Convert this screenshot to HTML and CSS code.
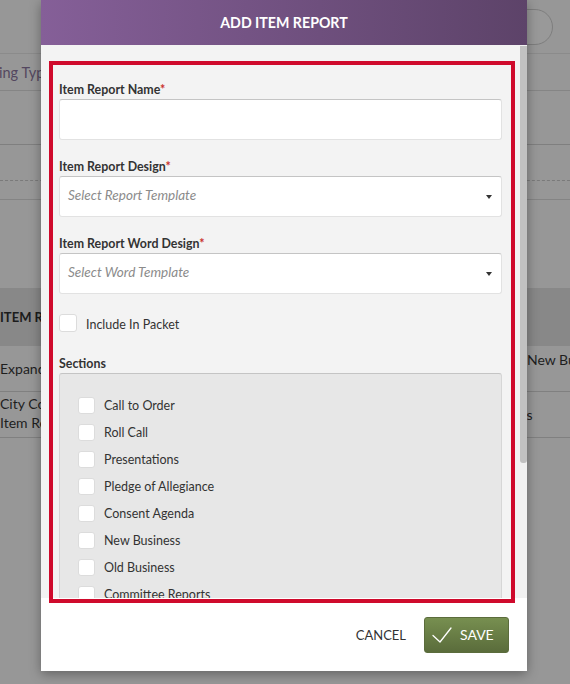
FILE: index.html
```html
<!DOCTYPE html>
<html>
<head>
<meta charset="utf-8">
<link rel="stylesheet" href="styles.css">
</head>
<body>
<div class="page">
  <div class="topbar"><div class="pill"></div></div>
  <div class="tabs"><span class="tab">ing Type</span></div>
  <div class="band band-a"></div>
  <div class="band band-b"></div>
  <div class="band band-c"></div>
  <div class="spacer"></div>
  <div class="thead"><span class="th">ITEM REPORT</span></div>
  <div class="trow">
    <div class="cell-left">Expanded</div>
    <div class="cell-right cell-top">New Bu</div>
  </div>
  <div class="trow">
    <div class="cell-left cell-two">City Council<br>Item Report</div>
    <div class="cell-right cell-hidden">Items</div>
  </div>
</div>

<div class="modal">
  <div class="modal-header">ADD ITEM REPORT</div>
  <div class="modal-body">
    <div class="form">
      <div class="field">
        <div class="label">Item Report Name<span class="req">*</span></div>
        <div class="input"></div>
      </div>
      <div class="field">
        <div class="label">Item Report Design<span class="req">*</span></div>
        <div class="input select"><span class="placeholder">Select Report Template</span><span class="caret"></span></div>
      </div>
      <div class="field field-last">
        <div class="label">Item Report Word Design<span class="req">*</span></div>
        <div class="input select"><span class="placeholder">Select Word Template</span><span class="caret"></span></div>
      </div>
      <div class="check-row packet">
        <span class="box"></span><span class="check-text">Include In Packet</span>
      </div>
      <div class="label">Sections</div>
      <div class="sections">
        <div class="check-row item"><span class="box"></span><span class="check-text">Call to Order</span></div>
        <div class="check-row item"><span class="box"></span><span class="check-text">Roll Call</span></div>
        <div class="check-row item"><span class="box"></span><span class="check-text">Presentations</span></div>
        <div class="check-row item"><span class="box"></span><span class="check-text">Pledge of Allegiance</span></div>
        <div class="check-row item"><span class="box"></span><span class="check-text">Consent Agenda</span></div>
        <div class="check-row item"><span class="box"></span><span class="check-text">New Business</span></div>
        <div class="check-row item"><span class="box"></span><span class="check-text">Old Business</span></div>
        <div class="check-row item"><span class="box"></span><span class="check-text">Committee Reports</span></div>
        <div class="check-row item"><span class="box"></span><span class="check-text">Adjournment</span></div>
      </div>
    </div>
    <div class="scrollbar"><div class="thumb"></div></div>
  </div>
  <div class="modal-footer">
    <button class="btn-cancel">CANCEL</button>
    <button class="btn-save">
      <svg class="check-icon" width="20" height="16" viewBox="0 0 20 16"><polyline points="1,8.5 8,15 19,1" fill="none" stroke="#ffffff" stroke-width="1.3" stroke-linecap="round" stroke-linejoin="round"/></svg>
      <span>SAVE</span>
    </button>
  </div>
</div>

<div class="annotation"></div>
</body>
</html>
```

FILE: styles.css
```css
html, body {
  margin: 0;
  padding: 0;
}
body {
  width: 570px;
  height: 684px;
  overflow: hidden;
  background: #979797;
  font-family: Lato, "Open Sans", sans-serif;
  position: relative;
}

/* background page (dimmed) */
.page {
  width: 570px;
  overflow: hidden;
}
.topbar {
  height: 53px;
  border-bottom: 1px solid #8b8b8b;
  display: flex;
  justify-content: flex-end;
}
.pill {
  width: 120px;
  height: 34px;
  margin-top: 9px;
  margin-right: 17px;
  border: 1px solid #7e7e7e;
  border-radius: 18px;
  background: #999999;
}
.tabs {
  height: 36px;
  border-bottom: 1px solid #858585;
  display: flex;
  align-items: center;
}
.tab {
  font-size: 14.5px;
  color: #54475f;
  margin-left: -1px;
}
.band-a {
  height: 53px;
  border-bottom: 1px solid #7f7f7f;
}
.band-b {
  height: 35px;
  border-bottom: 1px dashed #7a7a7a;
}
.band-c {
  height: 18px;
  border-bottom: 1px solid #848484;
}
.spacer {
  height: 88px;
}
.thead {
  height: 58px;
  background: #888888;
  display: flex;
  align-items: center;
}
.th {
  font-size: 13px;
  font-weight: 700;
  color: #1c1c1c;
  margin-left: 0;
}
.trow {
  height: 45px;
  border-bottom: 1px solid #808080;
  display: flex;
  font-size: 14px;
  color: #1e1e1e;
}
.cell-left {
  flex: none;
  width: 200px;
  display: flex;
  align-items: center;
  line-height: 19px;
}
.cell-two {
  align-items: flex-start;
  padding-top: 2px;
}
.cell-right {
  flex: none;
  margin-left: 327px;
  white-space: nowrap;
  display: flex;
  align-items: center;
}
.cell-top {
  align-items: flex-start;
  padding-top: 4px;
  line-height: 20px;
}
.cell-hidden {
  margin-left: 299px;
}

/* modal */
.modal {
  position: absolute;
  left: 41px;
  top: 0;
  width: 486px;
  background: #ffffff;
  box-shadow: 0 3px 12px rgba(0, 0, 0, 0.35);
  border-radius: 0 0 3px 3px;
}
.modal-header {
  height: 45px;
  background: linear-gradient(to right, #855f98, #5d4369);
  color: #ffffff;
  font-weight: 700;
  font-size: 14.2px;
  display: flex;
  align-items: center;
  justify-content: center;
}
.modal-body {
  height: 553px;
  display: flex;
  background: #f3f3f3;
  overflow: hidden;
}
.form {
  flex: 1;
  padding: 35px 18px 0 18px;
  overflow: hidden;
}
.scrollbar {
  width: 7px;
  padding-top: 1px;
  background: #f1f1f1;
}
.thumb {
  height: 417px;
  background: #c1c1c1;
  border-radius: 0 0 3px 3px;
}
.field {
  margin-bottom: 17px;
}
.field-last {
  margin-bottom: 20px;
}
.label {
  font-size: 12.4px;
  font-weight: 700;
  color: #333333;
  line-height: 19px;
}
.req {
  color: #c9302c;
}
.input {
  height: 39px;
  background: #ffffff;
  border: 1px solid #e2e2e2;
  border-top-color: #c4c4c4;
  border-radius: 3px;
}
.select {
  display: flex;
  align-items: center;
  justify-content: space-between;
  padding: 0 9px 0 8px;
}
.placeholder {
  font-size: 13.5px;
  font-style: italic;
  color: #8b8b8b;
  margin-top: -3px;
}
.caret {
  width: 0;
  height: 0;
  border-top: 4px solid #333333;
  border-left: 3px solid transparent;
  border-right: 3px solid transparent;
}
.check-row {
  display: flex;
  align-items: center;
}
.box {
  box-sizing: border-box;
  width: 18px;
  height: 18px;
  background: #ffffff;
  border: 1px solid #dcdcdc;
  border-radius: 3px;
  flex: none;
}
.check-text {
  font-size: 12.5px;
  color: #333333;
}
.packet {
  height: 18px;
  margin-bottom: 22px;
}
.packet .check-text {
  margin-left: 9px;
  margin-top: 2px;
}
.sections {
  background: #e7e7e7;
  border: 1px solid #d6d6d6;
  border-top-color: #c4c4c4;
  border-radius: 3px;
  padding: 18px 18px 17px;
}
.item {
  height: 27px;
}
.item .box {
  width: 17px;
  height: 17px;
}
.item .check-text {
  margin-left: 9px;
}

.modal-footer {
  height: 73px;
  background: #ffffff;
  display: flex;
  justify-content: flex-end;
  align-items: center;
  padding-right: 18px;
  gap: 18px;
}
.btn-cancel {
  background: none;
  border: none;
  padding: 0;
  font-family: Lato, sans-serif;
  font-size: 13px;
  color: #333333;
}
.btn-save {
  width: 85px;
  height: 36px;
  border: 1px solid #5b6c3c;
  border-radius: 3px;
  background: linear-gradient(#778f50, #5a6c3b);
  color: #ffffff;
  font-family: Lato, sans-serif;
  font-size: 14px;
  display: flex;
  align-items: center;
  padding: 0 0 0 7px;
  gap: 8px;
}
.check-icon {
  display: block;
  margin-top: 1px;
}

/* red annotation frame drawn over the screenshot */
.annotation {
  position: absolute;
  left: 49px;
  top: 61px;
  width: 466px;
  height: 542px;
  box-sizing: border-box;
  border: 4px solid #cf0a2c;
}
```
